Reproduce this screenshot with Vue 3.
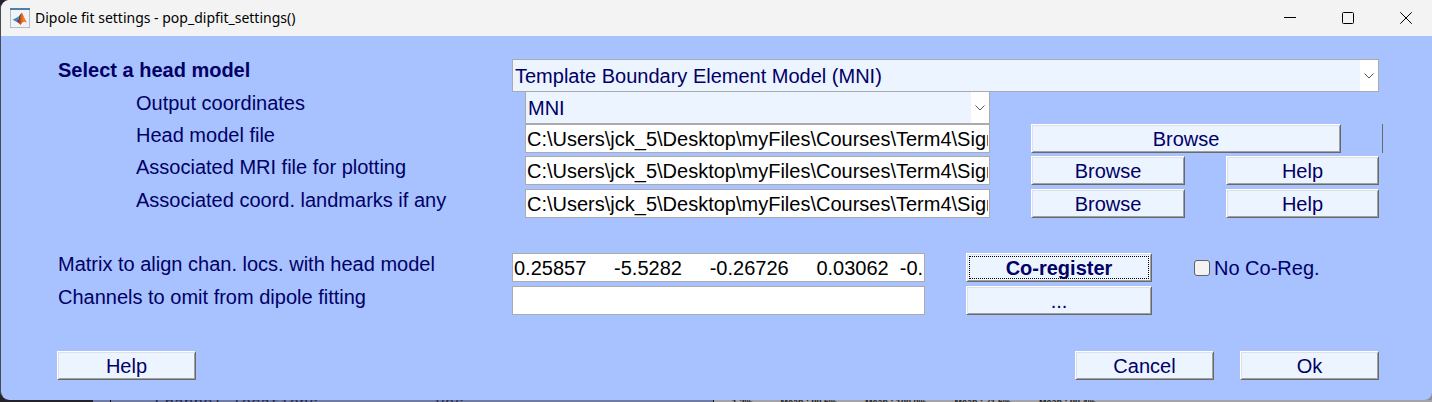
<script setup>
import { ref } from 'vue'

const headModel = ref('Template Boundary Element Model (MNI)')
const coordinates = ref('MNI')
const folder = 'C:\\Users\\jck_5\\Desktop\\myFiles\\Courses\\Term4\\Signal'
const modelFile = ref(folder)
const files = ref([
  { id: 'mri', label: 'Associated MRI file for plotting', path: folder },
  { id: 'landmarks', label: 'Associated coord. landmarks if any', path: folder },
])
const matrix = ref('0.25857     -5.5282     -0.26726     0.03062  -0.')
const omitted = ref('')
const noCoreg = ref(false)
const metrics = ['1.2%', 'Mean : 99.6%', 'Mean : 100.0%', 'Mean : 71.6%', 'Mean : 99.4%']
</script>

<template>
  <div class="desktop">
    <main class="window">
      <header class="titlebar">
        <svg class="logo" viewBox="0 0 20 20" aria-hidden="true">
          <defs>
            <linearGradient id="flame" x1="0" x2="1">
              <stop offset="0" stop-color="#8c1f14" />
              <stop offset="0.45" stop-color="#e8641b" />
              <stop offset="0.7" stop-color="#f08a24" />
              <stop offset="1" stop-color="#a8321a" />
            </linearGradient>
          </defs>
          <rect x="0.5" y="0.5" width="19" height="19" fill="#f1f3f6" stroke="#b4bac2" />
          <rect x="0" y="0" width="20" height="2" fill="#4d7fae" />
          <path d="M2.5 11.8 6.5 9.8 9 8 8 12 6 13.5Z" fill="#3f87c4" />
          <path d="M6 13.5 8 12 9.3 7.8 11.5 5 11 10 8.5 14.5Z" fill="#274c7e" />
          <path d="M7.5 14.5C9.5 13.5 10.2 7 11.7 4.8 13 5 14.5 11.5 17 14.8 15.3 13.4 14 13.2 12.5 14.5L10.3 17C9.7 16 8.8 14.5 7.5 14.5Z" fill="url(#flame)" />
        </svg>
        <h1 class="title">Dipole fit settings - pop_dipfit_settings()</h1>
        <div class="controls">
          <button class="control" type="button" aria-label="Minimize">
            <svg viewBox="0 0 12 12"><path d="M0 5.5H12" /></svg>
          </button>
          <button class="control" type="button" aria-label="Maximize">
            <svg viewBox="0 0 12 12"><rect x="0.5" y="0.5" width="11" height="11" rx="1" /></svg>
          </button>
          <button class="control" type="button" aria-label="Close">
            <svg viewBox="0 0 12 12"><path d="M0.3 0.3 11.7 11.7M11.7 0.3 0.3 11.7" /></svg>
          </button>
        </div>
      </header>

      <form class="form" @submit.prevent>
        <div class="row model">
          <label class="label strong" for="head-model">Select a head model</label>
          <div class="picker">
            <select id="head-model" v-model="headModel">
              <option>Template Boundary Element Model (MNI)</option>
            </select>
            <span class="arrow"><svg viewBox="0 0 10 6"><path d="M0.5 0.5 5 5 9.5 0.5" /></svg></span>
          </div>
        </div>
        <div class="row file coords">
          <label class="label nested" for="coords">Output coordinates</label>
          <div class="picker">
            <select id="coords" v-model="coordinates">
              <option>MNI</option>
            </select>
            <span class="arrow"><svg viewBox="0 0 10 6"><path d="M0.5 0.5 5 5 9.5 0.5" /></svg></span>
          </div>
        </div>
        <div class="row file wide">
          <label class="label nested" for="model-file">Head model file</label>
          <input id="model-file" v-model="modelFile" class="field" type="text" />
          <button class="button" type="button">Browse</button>
          <span class="edge"></span>
        </div>
        <div v-for="file in files" :key="file.id" class="row file">
          <label class="label nested" :for="file.id">{{ file.label }}</label>
          <input :id="file.id" v-model="file.path" class="field" type="text" />
          <button class="button" type="button">Browse</button>
          <button class="button" type="button">Help</button>
        </div>
        <div class="row align first">
          <label class="label" for="matrix">Matrix to align chan. locs. with head model</label>
          <input id="matrix" v-model="matrix" class="field" type="text" />
          <button class="button strong focused" type="button">Co-register</button>
          <label class="check"><input v-model="noCoreg" type="checkbox" />No Co-Reg.</label>
        </div>
        <div class="row align">
          <label class="label" for="omit">Channels to omit from dipole fitting</label>
          <input id="omit" v-model="omitted" class="field" type="text" />
          <button class="button" type="button">...</button>
        </div>
        <footer class="actions">
          <button class="button" type="button">Help</button>
          <button class="button push" type="button">Cancel</button>
          <button class="button" type="submit">Ok</button>
        </footer>
      </form>
    </main>
    <div class="behind">
      <div class="behind-left"><span>Channel locations</span><span>yes</span></div>
      <div class="behind-right"><span v-for="m in metrics" :key="m">{{ m }}</span></div>
    </div>
  </div>
</template>

<style>
body {
  margin: 0;
}
</style>

<style scoped>
.desktop {
  display: flex;
  flex-direction: column;
  min-height: 100vh;
  box-sizing: border-box;
  background: linear-gradient(90deg, #25222a 93px, #8f8f98 93px);
  font-family: "Liberation Sans", Arial, sans-serif;
  font-size: 20px;
  line-height: 22px;
  color: #000066;
}
.window {
  flex: 1;
  border-left: 1px solid #4a4a55;
  border-radius: 9px 0 8px 9px;
  background: #a8c2ff;
  overflow: hidden;
}
.titlebar {
  display: flex;
  align-items: center;
  height: 36px;
  padding-left: 9px;
  background: #f3f3f3;
  color: #000;
}
.logo {
  width: 20px;
  height: 20px;
}
.title {
  margin: 0 0 0 5px;
  font: 400 14px/20px "Noto Sans", "Open Sans", sans-serif;
}
.controls {
  display: flex;
  margin-left: auto;
  margin-right: -3px;
}
.control {
  display: grid;
  place-items: center;
  width: 58px;
  height: 34px;
  padding: 0;
  border: 0;
  background: none;
}
.control svg {
  width: 12px;
  height: 12px;
  fill: none;
  stroke: #000;
  stroke-width: 1;
}
.form {
  padding: 23px 53px 20px 56px;
}
.row {
  display: grid;
  column-gap: 41px;
  align-items: start;
  margin-bottom: 4px;
}
.model {
  grid-template-columns: 455fr 867fr;
  column-gap: 0;
  margin-bottom: 0;
}
.file {
  grid-template-columns: 427fr 465fr 154fr 153fr;
}
.coords {
  margin-bottom: 0;
}
.wide {
  grid-template-columns: 427fr 465fr 310fr 1px;
  margin-right: -4px;
  margin-bottom: 3px;
}
.align {
  grid-template-columns: 414fr 413fr 186fr 186fr;
}
.first {
  margin-top: 35px;
}
.label {
  padding-left: 1px;
  white-space: nowrap;
}
.nested {
  padding-left: 79px;
}
.strong {
  font-weight: 700;
}
.picker {
  position: relative;
}
.picker select {
  display: block;
  width: 100%;
  height: 33px;
  padding: 0 20px 0 2px;
  border: 1px solid #ababab;
  border-radius: 0;
  appearance: none;
  background: #ecf4ff;
  color: inherit;
  font: inherit;
}
.coords select {
  height: 32px;
  border-top-width: 0;
}
.arrow {
  position: absolute;
  top: 1px;
  right: 1px;
  bottom: 1px;
  display: grid;
  place-items: center;
  width: 18px;
  background: #fff;
  pointer-events: none;
}
.coords .arrow {
  top: 0;
}
.arrow svg {
  width: 10px;
  height: 6px;
  fill: none;
  stroke: #555;
}
.field {
  box-sizing: border-box;
  width: 100%;
  min-width: 0;
  height: 29px;
  padding: 2px 1px 0;
  border: 1px solid #ababab;
  background: #fff;
  color: #000;
  font: inherit;
}
.button {
  box-sizing: border-box;
  height: 29px;
  padding: 0;
  border: 1px solid;
  border-color: #fff #696969 #696969 #fff;
  background: #ecf4ff;
  box-shadow: inset 1px 1px #e0e0e3, inset -1px -1px #a0a0a0;
  color: inherit;
  font-family: inherit;
  font-size: inherit;
  line-height: inherit;
}
.focused {
  outline: 1px dotted #000;
  outline-offset: -4px;
}
.edge {
  height: 29px;
  background: #696969;
}
.check {
  display: flex;
  align-items: center;
  gap: 4px;
  height: 29px;
  padding-left: 1px;
  white-space: nowrap;
}
.check input {
  width: 16px;
  height: 16px;
  margin: 0;
  border: 1px solid #626262;
  border-radius: 3px;
  appearance: none;
  background: #f3f3f3;
}
.check input:checked {
  background: #000066;
}
.actions {
  display: flex;
  gap: 26px;
  margin-top: 36px;
}
.actions .button {
  width: 139px;
}
.push {
  margin-left: auto;
}
.behind {
  display: grid;
  grid-template-columns: 620fr 719fr;
  height: 2px;
  padding-left: 93px;
  overflow: hidden;
}
.behind-left {
  display: flex;
  gap: 117px;
  padding-left: 62px;
  background: linear-gradient(90deg, #6f7ba3 17px, #111 17px 18px, #6f7ba3 18px);
  color: #25284a;
  font: 16px/8px "Liberation Mono", monospace;
}
.behind-right {
  display: flex;
  gap: 28px;
  padding-left: 18px;
  border-left: 1px solid #111;
  background: #a3a3a8;
  color: #222;
  font: 700 9px/5px "Liberation Sans", sans-serif;
}
</style>
